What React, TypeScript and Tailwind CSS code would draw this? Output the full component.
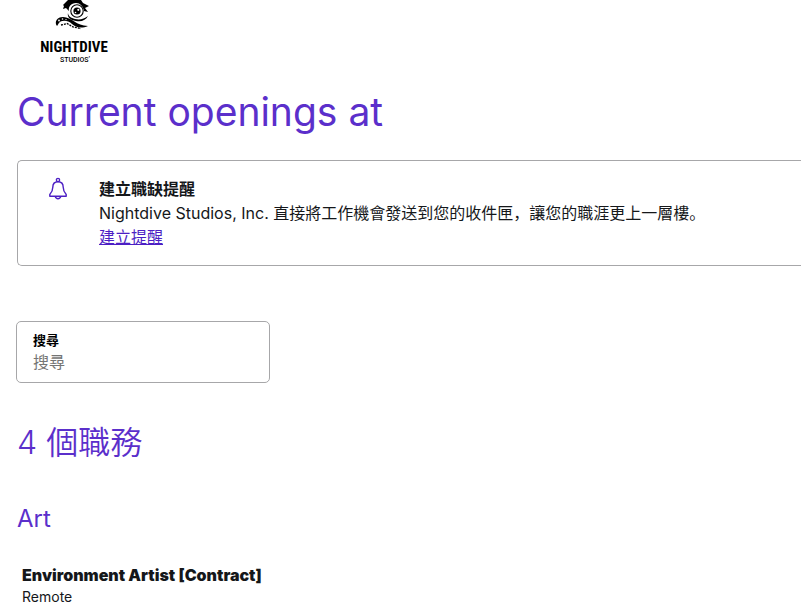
import { useState } from 'react'

const departments = [
    {
        name: 'Art',
        jobs: [{ title: 'Environment Artist [Contract]', location: 'Remote', href: '#environment-artist' }],
    },
]

function Logo() {
    return (
        <a href="#" aria-label="Nightdive Studios" className="block w-[66px] text-black">
            <svg viewBox="0 0 66 64" className="block w-full overflow-visible" fill="currentColor">
                {/* Head and eye */}
                <path d="M22 5L25 2L27 0H40L42 3L48 6L44 8L47 12L43 11C42 6 39 3 35 3C30 3 27 7 28 11L25 8L22 9L23 6Z" />
                <circle cx="36" cy="11" r="6.2" fill="white" stroke="currentColor" strokeWidth="1.1" />
                <circle cx="36" cy="11" r="3.6" />
                <circle cx="37.3" cy="9.8" r="1.1" fill="white" />
                <circle cx="34.5" cy="12.5" r="0.8" fill="white" />
                {/* Tentacle */}
                <path d="M27 13C27 16 30 18 34 19C39 20 43 19 47 16C45 20 41 22 35 21C29 20 26 17 27 13Z" />
                <path d="M16 26C13 22 16 17 22 17C31 17 35 26 47 26C40 29 34 27 31 24C27 20 20 20 18 23C17 24 17 25 16 26Z" />
                <path d="M20 25L26 23.5L32 27L40 28.5" fill="none" stroke="currentColor" strokeWidth="1.3" strokeDasharray="2 1" />
                <g fill="white">
                    <circle cx="18" cy="20.5" r="0.9" />
                    <circle cx="21.5" cy="19" r="0.8" />
                    <circle cx="25" cy="19.6" r="0.7" />
                </g>
                <text x="33" y="52" textAnchor="middle" fontSize="15" fontWeight="700" fontFamily="'Roboto Condensed', Roboto, sans-serif">NIGHTDIVE</text>
                <text x="34" y="62" textAnchor="middle" fontSize="7" fontWeight="500" fontFamily="Roboto, sans-serif">STUDIOS’</text>
            </svg>
        </a>
    )
}

function BellIcon() {
    return (
        <svg viewBox="0 0 20 24" className="h-6 w-5 shrink-0 text-[#4d1fc4]" fill="none" stroke="currentColor" strokeWidth="1.4" strokeLinejoin="round" aria-hidden="true">
            <circle cx="10" cy="3" r="1.6" />
            <path d="M10 4.7C6.7 4.7 4.8 7 4.8 10.2C4.8 14 3.4 15.7 1.8 17.4V19.2H18.2V17.4C16.6 15.7 15.2 14 15.2 10.2C15.2 7 13.3 4.7 10 4.7Z" />
            <path d="M7.2 19.4C7.6 21 8.6 21.7 10 21.7S12.4 21 12.8 19.4" />
        </svg>
    )
}

export default function App() {
    const [query, setQuery] = useState('')

    return (
        <div className="min-h-screen overflow-hidden bg-white font-['Inter','Noto_Sans_CJK_SC',sans-serif] text-[#15171a]">
            <header className="pl-[41px]">
                <Logo />
            </header>

            <main className="pl-[17px]">
                <h1 className="mt-6 text-[39px] leading-12 text-[#5b2fcb]">Current openings at</h1>

                {/* Job alert */}
                <section className="mt-6 flex gap-[31px] rounded-l-[5px] border border-r-0 border-[#a7a7a9] py-4 pr-8 pl-[30px]">
                    <BellIcon />
                    <div className="text-base leading-6">
                        <h2 className="font-bold">建立職缺提醒</h2>
                        <p>Nightdive Studios, Inc. 直接將工作機會發送到您的收件匣，讓您的職涯更上一層樓。</p>
                        <a href="#alert" className="text-[#4d1fc4] underline">建立提醒</a>
                    </div>
                </section>

                <div className="mt-[55px] -ml-px w-[254px] rounded-[5px] border border-[#a7a7a9] px-4 py-2">
                    <label htmlFor="keyword" className="block text-[13px] leading-5 font-bold text-black">搜尋</label>
                    <input
                        id="keyword"
                        type="text"
                        value={query}
                        onChange={(e) => setQuery(e.target.value)}
                        placeholder="搜尋"
                        className="block h-6 w-full text-base outline-none placeholder:text-[#757575]"
                    />
                </div>

                <h2 className="mt-10 text-[32px] leading-10 font-[350] text-[#5b2fcb]">4 個職務</h2>

                {departments.map((department) => (
                    <section key={department.name}>
                        <h3 className="mt-10 text-2xl text-[#5b2fcb]">{department.name}</h3>
                        <ul className="mt-7 pl-[5px]">
                            {department.jobs.map((job) => (
                                <li key={job.title}>
                                    <a href={job.href} className="block">
                                        <p className="text-base leading-6 font-black">{job.title}</p>
                                        <p className="text-sm leading-5">{job.location}</p>
                                    </a>
                                </li>
                            ))}
                        </ul>
                    </section>
                ))}
            </main>
        </div>
    )
}
